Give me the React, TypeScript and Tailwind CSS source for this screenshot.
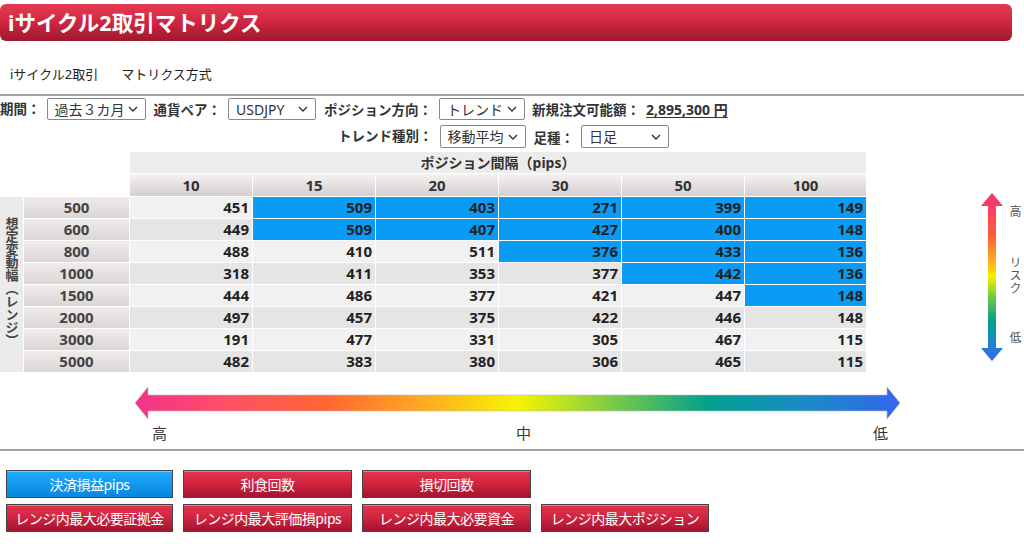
import React from 'react';

const cols = ['10', '15', '20', '30', '50', '100'];
const colStarts = ['col-start-3', 'col-start-4', 'col-start-5', 'col-start-6', 'col-start-7', 'col-start-8'];
const rowStarts = ['row-start-3', 'row-start-4', 'row-start-5', 'row-start-6', 'row-start-7', 'row-start-8', 'row-start-9', 'row-start-10'];

const rows: { label: string; vals: number[]; blue: number }[] = [
    { label: '500', vals: [451, 509, 403, 271, 399, 149], blue: 1 },
    { label: '600', vals: [449, 509, 407, 427, 400, 148], blue: 1 },
    { label: '800', vals: [488, 410, 511, 376, 433, 136], blue: 3 },
    { label: '1000', vals: [318, 411, 353, 377, 442, 136], blue: 4 },
    { label: '1500', vals: [444, 486, 377, 421, 447, 148], blue: 5 },
    { label: '2000', vals: [497, 457, 375, 422, 446, 148], blue: 6 },
    { label: '3000', vals: [191, 477, 331, 305, 467, 115], blue: 6 },
    { label: '5000', vals: [482, 383, 380, 306, 465, 115], blue: 6 },
];

const Chevron = () => (
    <svg width="10" height="6" viewBox="0 0 10 6" className="shrink-0">
        <polyline points="1,1 5,5 9,1" fill="none" stroke="#333" strokeWidth="1.4" />
    </svg>
);

const Select = ({ value, className }: { value: string; className: string }) => (
    <div className={`flex items-center justify-between border border-[#8a8a8a] rounded-[2px] bg-white pl-[7px] pr-[7px] text-[14px] text-[#333] ${className}`}>
        <span>{value}</span>
        <Chevron />
    </div>
);

const Label = ({ children }: { children: React.ReactNode }) => (
    <span className="text-[13.5px] font-bold text-[#333] whitespace-nowrap">{children}</span>
);

const Button = ({ children, blue }: { children: React.ReactNode; blue?: boolean }) => (
    <div
        className={`flex items-center justify-center h-[28px] border border-[#444] text-white text-[14px] tracking-[-0.5px] shadow-[inset_0_1px_0_rgba(255,255,255,0.35)] ${
            blue
                ? 'bg-linear-to-b from-[#1eaaff] to-[#0786e0]'
                : 'bg-linear-to-b from-[#e2344e] via-[#cf2440] to-[#a3142e]'
        }`}
    >
        {children}
    </div>
);

export default function App() {
    return (
        <div className="w-[1024px] h-[544px] overflow-hidden bg-white font-['Noto_Sans','Noto_Sans_CJK_JP',sans-serif] text-[#222]">
            {/* title bar */}
            <div className="pt-[4px]">
                <div className="w-[1012px] h-[37px] rounded-[6px] bg-linear-to-b from-[#e63a52] via-[#d02541] to-[#9e1930] flex items-center pl-[8px]">
                    <span className="text-white text-[21.5px] font-bold leading-none">iサイクル2取引マトリクス</span>
                </div>
            </div>

            {/* breadcrumb */}
            <div className="mt-[25px] h-[16px] flex items-center text-[13px] text-[#222] leading-[16px]">
                <span className="ml-[10px]">iサイクル2取引</span>
                <span className="ml-[23px]">マトリクス方式</span>
            </div>

            <div className="mt-[12px] h-[2px] bg-[#a3a3a3]" />

            {/* controls */}
            <div className="mt-[2px] h-[22px] flex items-center">
                <Label>期間：</Label>
                <Select value="過去３カ月" className="ml-[6px] w-[99px] h-[22px]" />
                <span className="ml-[8px]"><Label>通貨ペア：</Label></span>
                <Select value="USDJPY" className="ml-[7px] w-[88px] h-[22px]" />
                <span className="ml-[8px]"><Label>ポジション方向：</Label></span>
                <Select value="トレンド" className="ml-[7px] w-[86px] h-[22px]" />
                <span className="ml-[7px]"><Label>新規注文可能額：</Label></span>
                <span className="ml-[6px] text-[14px] font-bold text-[#333] underline underline-offset-2">2,895,300 円</span>
            </div>
            <div className="mt-[5px] h-[23px] flex items-center pl-[338px]">
                <Label>トレンド種別：</Label>
                <Select value="移動平均" className="ml-[7px] w-[86px] h-[23px]" />
                <span className="ml-[8px]"><Label>足種：</Label></span>
                <Select value="日足" className="ml-[7px] w-[88px] h-[23px]" />
            </div>

            {/* matrix + risk arrow */}
            <div className="mt-[4px] flex">
                <div className="shrink-0 grid grid-cols-[23px_105px_122px_122px_122px_122px_122px_121px] grid-rows-[21px_22px_repeat(8,21px)] gap-px bg-white w-[866px]">
                    <div className="row-start-1 col-start-3 col-span-6 bg-[#ececec] flex items-center justify-center text-[14px] font-bold text-[#333]">
                        ポジション間隔（pips）
                    </div>
                    {cols.map((c, i) => (
                        <div
                            key={c}
                            className={`row-start-2 ${colStarts[i]} bg-linear-to-b from-[#f4f2f2] to-[#d6cfcf] flex items-center justify-center text-[15px] font-bold text-[#333]`}
                        >
                            {c}
                        </div>
                    ))}
                    <div className="col-start-1 row-start-3 row-span-8 bg-[#ebebeb] flex items-start justify-center pt-[20px]">
                        <span className="[writing-mode:vertical-rl] [text-orientation:upright] text-[13px] font-bold text-[#444] leading-[20px] font-['Noto_Sans_CJK_JP',sans-serif]">
                            想定変動幅（レンジ）
                        </span>
                    </div>
                    {rows.map((r, ri) => (
                        <React.Fragment key={r.label}>
                            <div className={`${rowStarts[ri]} col-start-2 bg-linear-to-b from-[#f1ecec] to-[#dcd5d5] flex items-center justify-center text-[15px] font-bold text-[#444]`}>
                                {r.label}
                            </div>
                            {r.vals.map((v, ci) => (
                                <div
                                    key={ci}
                                    className={`${rowStarts[ri]} ${colStarts[ci]} flex items-center justify-end pr-[3px] text-[15px] font-bold text-[#222] ${
                                        ci >= r.blue ? 'bg-[#0a9cf5]' : ri % 2 === 0 ? 'bg-[#f1f1f1]' : 'bg-[#e5e5e5]'
                                    }`}
                                >
                                    {v}
                                </div>
                            ))}
                        </React.Fragment>
                    ))}
                </div>

                <div className="ml-[115px] mt-[41px] flex shrink-0">
                    <svg width="22" height="168" viewBox="0 0 22 168" className="shrink-0">
                        <defs>
                            <linearGradient id="vg" x1="0" y1="0" x2="0" y2="1">
                                <stop offset="0" stopColor="#f0307a" />
                                <stop offset="0.25" stopColor="#ff5a3c" />
                                <stop offset="0.38" stopColor="#ffa020" />
                                <stop offset="0.5" stopColor="#f2f000" />
                                <stop offset="0.62" stopColor="#70cc40" />
                                <stop offset="0.76" stopColor="#00a08c" />
                                <stop offset="0.88" stopColor="#1e88c8" />
                                <stop offset="1" stopColor="#3466ee" />
                            </linearGradient>
                        </defs>
                        <polygon points="11,0 22,13 15,13 15,155 22,155 11,168 0,155 7,155 7,13 0,13" fill="url(#vg)" />
                    </svg>
                    <div className="ml-[6px] w-[13px] h-[168px] pt-[11px] pb-[15px] flex flex-col justify-between items-center text-[12px] leading-[16px] text-[#555]">
                        <span>高</span>
                        <span className="[writing-mode:vertical-rl] [text-orientation:upright] leading-[13px] tracking-[1px] font-['Noto_Sans_CJK_JP',sans-serif]">リスク</span>
                        <span>低</span>
                    </div>
                </div>
            </div>

            {/* horizontal scale */}
            <div className="mt-[15px] pl-[135px]">
                <svg width="765" height="32" viewBox="0 0 765 32">
                    <defs>
                        <linearGradient id="hg" x1="0" y1="0" x2="1" y2="0">
                            <stop offset="0" stopColor="#f0338c" />
                            <stop offset="0.12" stopColor="#ff4f66" />
                            <stop offset="0.25" stopColor="#ff6633" />
                            <stop offset="0.37" stopColor="#ffa624" />
                            <stop offset="0.5" stopColor="#f7f500" />
                            <stop offset="0.62" stopColor="#80cc44" />
                            <stop offset="0.75" stopColor="#00a08e" />
                            <stop offset="0.87" stopColor="#1b8cc4" />
                            <stop offset="1" stopColor="#3366ee" />
                        </linearGradient>
                    </defs>
                    <polygon
                        points="0,16 13,0 13,8 752,8 752,0 765,16 752,32 752,24 13,24 13,32"
                        fill="url(#hg)"
                        stroke="#bdbdbd"
                        strokeWidth="0.6"
                    />
                </svg>
            </div>
            <div className="mt-[6px] h-[16px] flex text-[15px] leading-[16px] text-[#333]">
                <span className="ml-[152px]">高</span>
                <span className="ml-[349px]">中</span>
                <span className="ml-[342px]">低</span>
            </div>

            <div className="mt-[8px] h-[2px] bg-[#a3a3a3]" />

            {/* buttons */}
            <div className="mt-[19px] pl-[6px] grid grid-cols-[167px_169px_169px_168px] gap-x-[10px] gap-y-[6px] font-['Liberation_Sans_Narrow','Noto_Sans_CJK_JP',sans-serif]">
                <Button blue>決済損益pips</Button>
                <Button>利食回数</Button>
                <Button>損切回数</Button>
                <div />
                <Button>レンジ内最大必要証拠金</Button>
                <Button>レンジ内最大評価損pips</Button>
                <Button>レンジ内最大必要資金</Button>
                <Button>レンジ内最大ポジション</Button>
            </div>
        </div>
    );
}
